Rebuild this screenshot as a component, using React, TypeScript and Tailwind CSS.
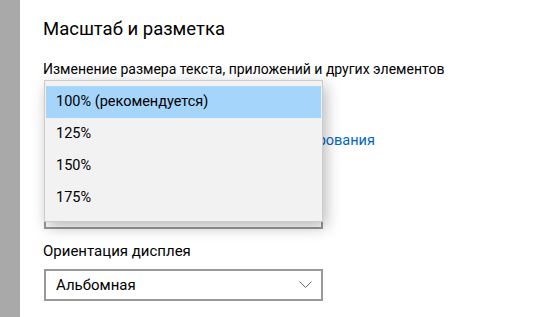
import { useState } from "react"

const font = { fontFamily: 'Roboto, "Noto Sans", sans-serif' }

const Chevron = () => (
  <svg width="13" height="8" viewBox="0 0 13 8" className="text-[#666]">
    <path d="M0.5 0.5 L6.5 6.5 L12.5 0.5" fill="none" stroke="currentColor" strokeWidth="1" />
  </svg>
)

const Select = ({ value }: { value: string }) => (
  <div className="ml-px w-[279px] h-[32px] border-2 border-[#999] bg-white flex items-center justify-between pl-[10px] pr-[9px] text-[15px] text-black">
    <span>{value}</span>
    <Chevron />
  </div>
)

const options = ["100% (рекомендуется)", "125%", "150%", "175%"]

const App = () => {
  const [selected, setSelected] = useState(0)

  return (
    <div className="flex w-[549px] h-[317px] bg-white overflow-hidden" style={font}>
      <div className="w-[20px] shrink-0 bg-[#a9a9a9]" />
      <div className="relative flex-1 pl-[23px] pt-[15px]">
        <h1 className="text-[18.5px] leading-[28px] text-black">Масштаб и разметка</h1>

        <p className="mt-[15px] text-[14px] leading-[22px] text-black">
          Изменение размера текста, приложений и других элементов
        </p>
        <div className="mt-[7px]">
          <Select value={options[selected]} />
        </div>

        <a className="block mt-[11px] ml-[3px] text-[14.5px] leading-[22px] text-[#0067c0]">
          Дополнительные параметры масштабирования
        </a>

        <p className="mt-[17px] ml-[3px] text-[15px] leading-[22px] text-black">Разрешение</p>
        <div className="mt-[6px]">
          <Select value="1920 × 1080 (рекомендуется)" />
        </div>

        <p className="mt-[11px] text-[15px] leading-[22px] text-black">Ориентация дисплея</p>
        <div className="mt-[7px]">
          <Select value="Альбомная" />
        </div>

        {/* open dropdown */}
        <ul className="absolute left-[24px] top-[80px] w-[279px] h-[142px] bg-[#f2f2f2] border border-[#cccccc] pt-[5px] px-px shadow-[3px_5px_14px_rgba(0,0,0,0.28)]">
          {options.map((o, i) => (
            <li
              key={o}
              onClick={() => setSelected(i)}
              className={`h-[32px] flex items-center pl-[10px] text-[14.5px] text-black cursor-default ${i === selected ? "bg-[#a6d5fb]" : ""}`}
            >
              {o}
            </li>
          ))}
        </ul>
      </div>
    </div>
  )
}

export default App
